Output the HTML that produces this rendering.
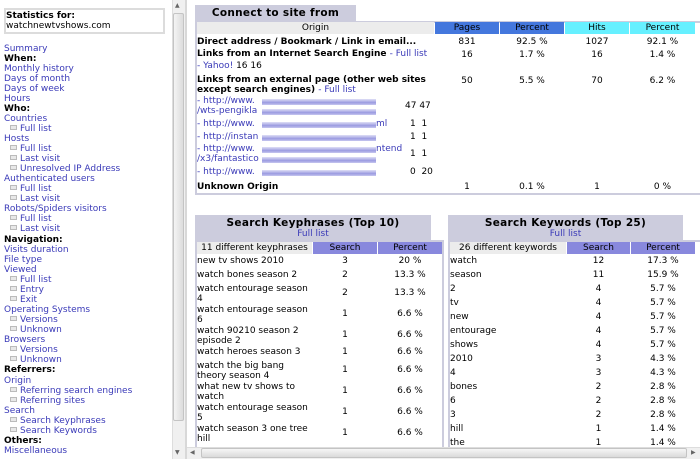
<!DOCTYPE html>
<html><head><meta charset="utf-8">
<style>
*{margin:0;padding:0;box-sizing:border-box}
body{width:700px;height:459px;overflow:hidden;background:#fff;font-family:"DejaVu Sans","Liberation Sans",sans-serif;font-size:9px;color:#000;position:relative}
.a{position:absolute;white-space:nowrap;line-height:10px}
.l{color:#3a3ab8}
.b{font-weight:bold}
.c{text-align:center}
.t{font-size:10.5px;letter-spacing:0.3px}
.ic{display:inline-block;width:7px;height:5px;border:1px solid #bbb;background:#e8e8e8;margin:0 3px 0 0;vertical-align:1px}
.bar{position:absolute;height:6px;background:linear-gradient(#e0e0f6,#9a9ae0 60%,#c8c8f0)}
.box{position:absolute}
</style></head><body>

<!-- left frame -->
<div class="box" style="left:4px;top:8px;width:161px;height:26px;border:2px solid #dcdcdc"></div>
<div class="a b" style="left:6px;top:11px">Statistics for:</div>
<div class="a" style="left:6px;top:21px">watchnewtvshows.com</div>
<div class="box" style="left:172px;top:0;width:13px;height:459px;background:#f0f0f0;border-left:1px solid #ddd"></div>
<div class="box" style="left:173px;top:13px;width:11px;height:408px;background:linear-gradient(90deg,#f4f4f4,#dcdcdc);border:1px solid #c4c4c4;border-radius:2px"></div>
<div class="a" style="left:175px;top:1px;font-size:6px;color:#666">▲</div>
<div class="a" style="left:175px;top:448px;font-size:6px;color:#666">▼</div>
<div class="box" style="left:185px;top:0;width:2px;height:459px;background:#d8d8d8"></div>

<div class="a l" style="left:4px;top:44px">Summary</div>
<div class="a b" style="left:4px;top:54px">When:</div>
<div class="a l" style="left:4px;top:64px">Monthly history</div>
<div class="a l" style="left:4px;top:74px">Days of month</div>
<div class="a l" style="left:4px;top:84px">Days of week</div>
<div class="a l" style="left:4px;top:94px">Hours</div>
<div class="a b" style="left:4px;top:104px">Who:</div>
<div class="a l" style="left:4px;top:114px">Countries</div>
<div class="a l" style="left:10px;top:124px"><span class="ic"></span>Full list</div>
<div class="a l" style="left:4px;top:134px">Hosts</div>
<div class="a l" style="left:10px;top:144px"><span class="ic"></span>Full list</div>
<div class="a l" style="left:10px;top:154px"><span class="ic"></span>Last visit</div>
<div class="a l" style="left:10px;top:164px"><span class="ic"></span>Unresolved IP Address</div>
<div class="a l" style="left:4px;top:174px">Authenticated users</div>
<div class="a l" style="left:10px;top:184px"><span class="ic"></span>Full list</div>
<div class="a l" style="left:10px;top:194px"><span class="ic"></span>Last visit</div>
<div class="a l" style="left:4px;top:204px">Robots/Spiders visitors</div>
<div class="a l" style="left:10px;top:214px"><span class="ic"></span>Full list</div>
<div class="a l" style="left:10px;top:224px"><span class="ic"></span>Last visit</div>
<div class="a b" style="left:4px;top:235px">Navigation:</div>
<div class="a l" style="left:4px;top:245px">Visits duration</div>
<div class="a l" style="left:4px;top:255px">File type</div>
<div class="a l" style="left:4px;top:265px">Viewed</div>
<div class="a l" style="left:10px;top:275px"><span class="ic"></span>Full list</div>
<div class="a l" style="left:10px;top:285px"><span class="ic"></span>Entry</div>
<div class="a l" style="left:10px;top:295px"><span class="ic"></span>Exit</div>
<div class="a l" style="left:4px;top:305px">Operating Systems</div>
<div class="a l" style="left:10px;top:315px"><span class="ic"></span>Versions</div>
<div class="a l" style="left:10px;top:325px"><span class="ic"></span>Unknown</div>
<div class="a l" style="left:4px;top:335px">Browsers</div>
<div class="a l" style="left:10px;top:345px"><span class="ic"></span>Versions</div>
<div class="a l" style="left:10px;top:355px"><span class="ic"></span>Unknown</div>
<div class="a b" style="left:4px;top:365px">Referrers:</div>
<div class="a l" style="left:4px;top:376px">Origin</div>
<div class="a l" style="left:10px;top:386px"><span class="ic"></span>Referring search engines</div>
<div class="a l" style="left:10px;top:396px"><span class="ic"></span>Referring sites</div>
<div class="a l" style="left:4px;top:406px">Search</div>
<div class="a l" style="left:10px;top:416px"><span class="ic"></span>Search Keyphrases</div>
<div class="a l" style="left:10px;top:426px"><span class="ic"></span>Search Keywords</div>
<div class="a b" style="left:4px;top:436px">Others:</div>
<div class="a l" style="left:4px;top:446px">Miscellaneous</div>

<!-- top table -->
<div class="box" style="left:195px;top:5px;width:161px;height:17px;background:#ccccdd"></div>
<div class="a b c t" style="left:195px;top:8px;width:161px">Connect to site from</div>
<div class="box" style="left:195px;top:21px;width:505px;height:174px;border:2px solid #ccccdd;border-right:none"></div>
<div class="box" style="left:197px;top:22px;width:237px;height:12px;background:#ececec"></div>
<div class="box" style="left:435px;top:22px;width:64px;height:12px;background:#4477dd"></div>
<div class="box" style="left:500px;top:22px;width:64px;height:12px;background:#4477dd"></div>
<div class="box" style="left:565px;top:22px;width:64px;height:12px;background:#66f0ff"></div>
<div class="box" style="left:630px;top:22px;width:65px;height:12px;background:#66f0ff"></div>
<div class="a c" style="left:197px;top:23px;width:237px">Origin</div>
<div class="a c" style="left:435px;top:23px;width:64px">Pages</div>
<div class="a c" style="left:500px;top:23px;width:64px">Percent</div>
<div class="a c" style="left:565px;top:23px;width:64px">Hits</div>
<div class="a c" style="left:630px;top:23px;width:65px">Percent</div>

<div class="a b" style="left:197px;top:37px">Direct address / Bookmark / Link in email...</div>
<div class="a b" style="left:197px;top:49px">Links from an Internet Search Engine <span class="l" style="font-weight:normal">- Full list</span></div>
<div class="a" style="left:197px;top:61px"><span class="l">- Yahoo!</span> 16 16</div>
<div class="a b" style="left:197px;top:75px">Links from an external page (other web sites</div>
<div class="a b" style="left:197px;top:85px">except search engines) <span class="l" style="font-weight:normal">- Full list</span></div>
<div class="a l" style="left:197px;top:96px">- http://www.</div>
<div class="a l" style="left:197px;top:106px">/wts-pengikla</div>
<div class="bar" style="left:262px;top:99px;width:114px"></div>
<div class="bar" style="left:262px;top:109px;width:114px"></div>
<div class="a" style="left:405px;top:101px">47 47</div>
<div class="a l" style="left:197px;top:119px">- http://www.</div>
<div class="bar" style="left:262px;top:122px;width:114px"></div>
<div class="a l" style="left:376px;top:119px">ml</div>
<div class="a" style="left:410px;top:119px">1&nbsp;&nbsp;1</div>
<div class="a l" style="left:197px;top:132px">- http://instan</div>
<div class="bar" style="left:262px;top:135px;width:114px"></div>
<div class="a" style="left:410px;top:132px">1&nbsp;&nbsp;1</div>
<div class="a l" style="left:197px;top:144px">- http://www.</div>
<div class="bar" style="left:262px;top:147px;width:114px"></div>
<div class="a l" style="left:376px;top:144px">ntend</div>
<div class="a l" style="left:197px;top:154px">/x3/fantastico</div>
<div class="bar" style="left:262px;top:157px;width:114px"></div>
<div class="a" style="left:410px;top:149px">1&nbsp;&nbsp;1</div>
<div class="a l" style="left:197px;top:167px">- http://www.</div>
<div class="bar" style="left:262px;top:170px;width:114px"></div>
<div class="a" style="left:410px;top:167px">0&nbsp;&nbsp;20</div>
<div class="a b" style="left:197px;top:182px">Unknown Origin</div>

<div class="a c" style="left:435px;top:37px;width:64px">831</div>
<div class="a c" style="left:500px;top:37px;width:64px">92.5 %</div>
<div class="a c" style="left:565px;top:37px;width:64px">1027</div>
<div class="a c" style="left:630px;top:37px;width:65px">92.1 %</div>
<div class="a c" style="left:435px;top:50px;width:64px">16</div>
<div class="a c" style="left:500px;top:50px;width:64px">1.7 %</div>
<div class="a c" style="left:565px;top:50px;width:64px">16</div>
<div class="a c" style="left:630px;top:50px;width:65px">1.4 %</div>
<div class="a c" style="left:435px;top:76px;width:64px">50</div>
<div class="a c" style="left:500px;top:76px;width:64px">5.5 %</div>
<div class="a c" style="left:565px;top:76px;width:64px">70</div>
<div class="a c" style="left:630px;top:76px;width:65px">6.2 %</div>
<div class="a c" style="left:435px;top:182px;width:64px">1</div>
<div class="a c" style="left:500px;top:182px;width:64px">0.1 %</div>
<div class="a c" style="left:565px;top:182px;width:64px">1</div>
<div class="a c" style="left:630px;top:182px;width:65px">0 %</div>

<!-- keyphrases -->
<div class="box" style="left:195px;top:215px;width:236px;height:27px;background:#ccccdd"></div>
<div class="a b c t" style="left:195px;top:218px;width:236px">Search Keyphrases (Top 10)</div>
<div class="a l c" style="left:195px;top:229px;width:236px">Full list</div>
<div class="box" style="left:195px;top:240px;width:249px;height:210px;border:2px solid #ccccdd;border-bottom:none"></div>
<div class="box" style="left:197px;top:242px;width:115px;height:12px;background:#ececec"></div>
<div class="box" style="left:313px;top:242px;width:64px;height:12px;background:#8888dd"></div>
<div class="box" style="left:378px;top:242px;width:64px;height:12px;background:#8888dd"></div>
<div class="a c" style="left:197px;top:243px;width:115px">11 different keyphrases</div>
<div class="a c" style="left:313px;top:243px;width:64px">Search</div>
<div class="a c" style="left:378px;top:243px;width:64px">Percent</div>

<div class="a" style="left:197px;top:256px">new tv shows 2010</div><div class="a c" style="left:313px;top:256px;width:64px">3</div><div class="a c" style="left:378px;top:256px;width:64px">20 %</div>
<div class="a" style="left:197px;top:270px">watch bones season 2</div><div class="a c" style="left:313px;top:270px;width:64px">2</div><div class="a c" style="left:378px;top:270px;width:64px">13.3 %</div>
<div class="a" style="left:197px;top:284px">watch entourage season<br>4</div><div class="a c" style="left:313px;top:288px;width:64px">2</div><div class="a c" style="left:378px;top:288px;width:64px">13.3 %</div>
<div class="a" style="left:197px;top:305px">watch entourage season<br>6</div><div class="a c" style="left:313px;top:309px;width:64px">1</div><div class="a c" style="left:378px;top:309px;width:64px">6.6 %</div>
<div class="a" style="left:197px;top:326px">watch 90210 season 2<br>episode 2</div><div class="a c" style="left:313px;top:330px;width:64px">1</div><div class="a c" style="left:378px;top:330px;width:64px">6.6 %</div>
<div class="a" style="left:197px;top:347px">watch heroes season 3</div><div class="a c" style="left:313px;top:347px;width:64px">1</div><div class="a c" style="left:378px;top:347px;width:64px">6.6 %</div>
<div class="a" style="left:197px;top:361px">watch the big bang<br>theory season 4</div><div class="a c" style="left:313px;top:365px;width:64px">1</div><div class="a c" style="left:378px;top:365px;width:64px">6.6 %</div>
<div class="a" style="left:197px;top:382px">what new tv shows to<br>watch</div><div class="a c" style="left:313px;top:386px;width:64px">1</div><div class="a c" style="left:378px;top:386px;width:64px">6.6 %</div>
<div class="a" style="left:197px;top:403px">watch entourage season<br>5</div><div class="a c" style="left:313px;top:407px;width:64px">1</div><div class="a c" style="left:378px;top:407px;width:64px">6.6 %</div>
<div class="a" style="left:197px;top:424px">watch season 3 one tree<br>hill</div><div class="a c" style="left:313px;top:428px;width:64px">1</div><div class="a c" style="left:378px;top:428px;width:64px">6.6 %</div>

<!-- keywords -->
<div class="box" style="left:448px;top:215px;width:235px;height:27px;background:#ccccdd"></div>
<div class="a b c t" style="left:448px;top:218px;width:235px">Search Keywords (Top 25)</div>
<div class="a l c" style="left:448px;top:229px;width:235px">Full list</div>
<div class="box" style="left:448px;top:240px;width:252px;height:210px;border:2px solid #ccccdd;border-bottom:none;border-right:none"></div>
<div class="box" style="left:450px;top:242px;width:116px;height:12px;background:#ececec"></div>
<div class="box" style="left:567px;top:242px;width:63px;height:12px;background:#8888dd"></div>
<div class="box" style="left:631px;top:242px;width:64px;height:12px;background:#8888dd"></div>
<div class="a c" style="left:450px;top:243px;width:116px">26 different keywords</div>
<div class="a c" style="left:567px;top:243px;width:63px">Search</div>
<div class="a c" style="left:631px;top:243px;width:64px">Percent</div>

<div class="a" style="left:450px;top:256px">watch</div><div class="a c" style="left:567px;top:256px;width:63px">12</div><div class="a c" style="left:631px;top:256px;width:64px">17.3 %</div>
<div class="a" style="left:450px;top:270px">season</div><div class="a c" style="left:567px;top:270px;width:63px">11</div><div class="a c" style="left:631px;top:270px;width:64px">15.9 %</div>
<div class="a" style="left:450px;top:284px">2</div><div class="a c" style="left:567px;top:284px;width:63px">4</div><div class="a c" style="left:631px;top:284px;width:64px">5.7 %</div>
<div class="a" style="left:450px;top:298px">tv</div><div class="a c" style="left:567px;top:298px;width:63px">4</div><div class="a c" style="left:631px;top:298px;width:64px">5.7 %</div>
<div class="a" style="left:450px;top:312px">new</div><div class="a c" style="left:567px;top:312px;width:63px">4</div><div class="a c" style="left:631px;top:312px;width:64px">5.7 %</div>
<div class="a" style="left:450px;top:326px">entourage</div><div class="a c" style="left:567px;top:326px;width:63px">4</div><div class="a c" style="left:631px;top:326px;width:64px">5.7 %</div>
<div class="a" style="left:450px;top:340px">shows</div><div class="a c" style="left:567px;top:340px;width:63px">4</div><div class="a c" style="left:631px;top:340px;width:64px">5.7 %</div>
<div class="a" style="left:450px;top:354px">2010</div><div class="a c" style="left:567px;top:354px;width:63px">3</div><div class="a c" style="left:631px;top:354px;width:64px">4.3 %</div>
<div class="a" style="left:450px;top:368px">4</div><div class="a c" style="left:567px;top:368px;width:63px">3</div><div class="a c" style="left:631px;top:368px;width:64px">4.3 %</div>
<div class="a" style="left:450px;top:382px">bones</div><div class="a c" style="left:567px;top:382px;width:63px">2</div><div class="a c" style="left:631px;top:382px;width:64px">2.8 %</div>
<div class="a" style="left:450px;top:396px">6</div><div class="a c" style="left:567px;top:396px;width:63px">2</div><div class="a c" style="left:631px;top:396px;width:64px">2.8 %</div>
<div class="a" style="left:450px;top:410px">3</div><div class="a c" style="left:567px;top:410px;width:63px">2</div><div class="a c" style="left:631px;top:410px;width:64px">2.8 %</div>
<div class="a" style="left:450px;top:424px">hill</div><div class="a c" style="left:567px;top:424px;width:63px">1</div><div class="a c" style="left:631px;top:424px;width:64px">1.4 %</div>
<div class="a" style="left:450px;top:438px">the</div><div class="a c" style="left:567px;top:438px;width:63px">1</div><div class="a c" style="left:631px;top:438px;width:64px">1.4 %</div>

<!-- horizontal scrollbar -->
<div class="box" style="left:187px;top:447px;width:513px;height:12px;background:#f0f0f0;border-top:1px solid #ddd"></div>
<div class="box" style="left:201px;top:448px;width:486px;height:10px;background:linear-gradient(#f6f6f6,#dadada);border:1px solid #c4c4c4;border-radius:2px"></div>
<div class="a" style="left:190px;top:448px;font-size:6px;color:#666">◀</div>
<div class="a" style="left:691px;top:448px;font-size:6px;color:#666">▶</div>
</body></html>
